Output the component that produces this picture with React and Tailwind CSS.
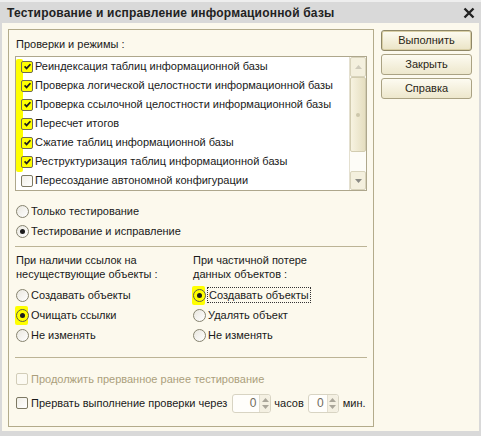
import React from "react";

const font = { fontFamily: '"Liberation Sans", Arial, sans-serif' };

function Check() {
  return (
    <svg width="9" height="9" viewBox="0 0 9 9">
      <path d="M1.6 4.3 L3.6 6.4 L7.4 2.2" fill="none" stroke="#1e1e1e" strokeWidth="1.7" />
    </svg>
  );
}

function Box({ checked, yellow, disabled }) {
  if (disabled) {
    return <span className="w-[12px] h-[12px] shrink-0 rounded-[2px] border border-[#d2cdb8] bg-[#fcfaf2]" />;
  }
  return (
    <span
      className={
        yellow
          ? "w-[12px] h-[12px] shrink-0 rounded-[2px] border border-[#6e6a55] bg-[#ffff00] flex items-center justify-center"
          : "w-[12px] h-[12px] shrink-0 rounded-[2px] border border-[#7d7963] bg-gradient-to-br from-[#f0eee6] to-white flex items-center justify-center"
      }
    >
      {checked && <Check />}
    </span>
  );
}

function Radio({ on, yellow }) {
  return (
    <span className="relative w-[13px] h-[13px] shrink-0 flex items-center justify-center">
      {yellow && <span className="absolute -left-[1px] -top-[3px] w-[13px] h-[19px] bg-[#ffff00] rounded-[2px]" />}
      <span
        className={
          yellow
            ? "relative w-[13px] h-[13px] rounded-full border border-[#5f5c4c] bg-[#ffff00] flex items-center justify-center"
            : "relative w-[13px] h-[13px] rounded-full border border-[#86836f] bg-gradient-to-br from-[#e9e7df] to-white flex items-center justify-center"
        }
      >
        {on && <span className="w-[5px] h-[5px] rounded-full bg-[#1c1c1c]" />}
      </span>
    </span>
  );
}

function RadioRow({ on, yellow, focus, children }) {
  return (
    <div className="h-[20px] flex items-center whitespace-nowrap">
      <Radio on={on} yellow={yellow} />
      <span
        className={
          focus
            ? "ml-[1px] px-[1px] leading-[14px] border border-dotted border-[#333]"
            : "ml-[2px] leading-[14px]"
        }
      >
        {children}
      </span>
    </div>
  );
}

function Tri({ up, color }) {
  return (
    <svg width="7" height="4" viewBox="0 0 7 4">
      <path d={up ? "M0 4 L3.5 0 L7 4 Z" : "M0 0 L3.5 4 L7 0 Z"} fill={color} />
    </svg>
  );
}

function Spin({ w }) {
  return (
    <div className={w === 39 ? "w-[39px] h-[19px] flex rounded-[3px] border border-[#d8d4c3] bg-[#fffefb]" : "w-[31px] h-[19px] flex rounded-[3px] border border-[#d8d4c3] bg-[#fffefb]"}>
      <div className="flex-1 flex items-center justify-end pr-[3px] text-[12px] text-[#6f6b5e]">0</div>
      <div className="w-[11px] flex flex-col items-center justify-center gap-[3px] bg-[#f4f0e2] border-l border-[#e2decf] rounded-r-[3px]">
        <Tri up color="#aaa69a" />
        <Tri color="#aaa69a" />
      </div>
    </div>
  );
}

const items = [
  ["Реиндексация таблиц информационной базы", true],
  ["Проверка логической целостности информационной базы", true],
  ["Проверка ссылочной целостности информационной базы", true],
  ["Пересчет итогов", true],
  ["Сжатие таблиц информационной базы", true],
  ["Реструктуризация таблиц информационной базы", true],
  ["Пересоздание автономной конфигурации", false],
];

function Button({ children, def }) {
  return (
    <div
      className={
        def
          ? "h-[21px] w-[91px] flex items-center justify-center rounded-[3px] border border-[#8f8766] bg-gradient-to-b from-[#fdfbf1] to-[#ebe4c6] shadow-[inset_0_0_0_1px_#d9cfa6] text-[#2a2616]"
          : "h-[21px] w-[91px] flex items-center justify-center rounded-[3px] border border-[#aaa283] bg-gradient-to-b from-[#fdfbf1] to-[#ede7cc] text-[#2a2616]"
      }
    >
      {children}
    </div>
  );
}

export default function App() {
  return (
    <div
      className="w-[481px] h-[436px] bg-[#d9d9d9] border-t-2 border-[#eeeeee] flex flex-col text-[11px] text-[#1a1a1a]"
      style={font}
    >
      <div className="h-[21px] shrink-0 flex items-center justify-between pl-[7px] pr-[6px]">
        <span className="font-bold text-[12px] text-[#222] tracking-[0.2px]">
          Тестирование и исправление информационной базы
        </span>
        <svg width="12" height="12" viewBox="0 0 12 12">
          <path d="M1.5 1.5 L10.5 10.5 M10.5 1.5 L1.5 10.5" stroke="#222" strokeWidth="2.4" />
        </svg>
      </div>
      <div className="flex-1 mx-[2px] mb-[5px] bg-[#fcf9ed] flex pt-[6px] pl-[6px]">
        <div className="w-[366px] h-[398px] shrink-0 border border-[#b3ab8b] flex flex-col px-[6px]">
          <div className="mt-[7px] ml-[1px] leading-[15px] h-[15px]">Проверки и режимы :</div>
          <div className="mt-[4px] h-[135px] border border-[#aea78c] bg-white flex">
            <div className="relative flex-1 min-w-0 flex flex-col">
              <span className="absolute left-0 top-[2px] w-[7px] h-[113px] bg-[#ffff00] rounded-[2px]" />
              {items.map(([t, c], i) => (
                <div key={i} className="relative h-[19px] flex items-center pl-[5px] whitespace-nowrap overflow-hidden">
                  <Box checked={c} yellow={c} />
                  <span className="ml-[2px]">{t}</span>
                </div>
              ))}
            </div>
            <div className="w-[17px] shrink-0 flex flex-col bg-[#fdfcf7] border-l border-[#e4e0d0]">
              <div className="h-[20px] flex items-center justify-center bg-[#f4f0de] border border-[#d9d4bc] rounded-[2px]">
                <Tri up color="#cfcbbb" />
              </div>
              <div className="h-[75px] flex items-center justify-center bg-gradient-to-r from-[#f7f3e1] to-[#e5dec0] border border-[#d2ccb0] rounded-[2px]">
                <span className="w-[4px] h-[4px] rounded-full bg-[#cdc7ab]" />
              </div>
              <div className="flex-1" />
              <div className="h-[19px] flex items-center justify-center bg-[#f4f0de] border border-[#d9d4bc] rounded-[2px]">
                <Tri color="#8a8a84" />
              </div>
            </div>
          </div>
          <div className="mt-[10px] ml-[1px]">
            <RadioRow>Только тестирование</RadioRow>
            <RadioRow on>Тестирование и исправление</RadioRow>
          </div>
          <div className="mt-[5px] h-px bg-[#bcb496]" />
          <div className="mt-[6px] ml-[1px] flex">
            <div className="w-[177px]">
              <div className="leading-[14px]">При наличии ссылок на</div>
              <div className="leading-[14px]">несуществующие объекты :</div>
              <div className="mt-[4px]">
                <RadioRow>Создавать объекты</RadioRow>
                <RadioRow on yellow>Очищать ссылки</RadioRow>
                <RadioRow>Не изменять</RadioRow>
              </div>
            </div>
            <div>
              <div className="leading-[14px]">При частичной потере</div>
              <div className="leading-[14px]">данных объектов :</div>
              <div className="mt-[4px]">
                <RadioRow on yellow focus>Создавать объекты</RadioRow>
                <RadioRow>Удалять объект</RadioRow>
                <RadioRow>Не изменять</RadioRow>
              </div>
            </div>
          </div>
          <div className="mt-[12px] h-px bg-[#bcb496]" />
          <div className="mt-[11px] ml-[1px] h-[20px] flex items-center whitespace-nowrap">
            <Box disabled />
            <span className="ml-[3px] text-[#ab9f7c]">Продолжить прерванное ранее тестирование</span>
          </div>
          <div className="mt-[4px] ml-[1px] h-[20px] flex items-center whitespace-nowrap">
            <Box />
            <span className="ml-[3px]">Прервать выполнение проверки через</span>
            <div className="ml-[5px]"><Spin w={39} /></div>
            <span className="ml-[3px]">часов</span>
            <div className="ml-[4px]"><Spin w={31} /></div>
            <span className="ml-[4px]">мин.</span>
          </div>
        </div>
        <div className="ml-[7px] mt-[1px] flex flex-col gap-[3px]">
          <Button def>Выполнить</Button>
          <Button>Закрыть</Button>
          <Button>Справка</Button>
        </div>
      </div>
    </div>
  );
}
